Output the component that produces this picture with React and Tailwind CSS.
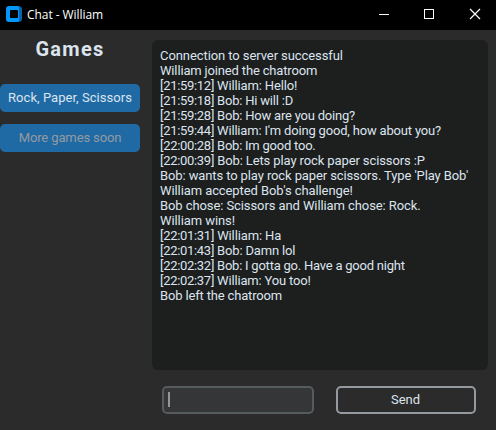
const messages = [
  { text: "Connection to server successful", spacing: "tracking-[-0.08px]" },
  { text: "William joined the chatroom", spacing: "tracking-[-0.16px]" },
  { time: "[21:59:12]", text: " William: Hello!", spacing: "tracking-[-0.15px]" },
  { time: "[21:59:18]", text: " Bob: Hi will :D", spacing: "tracking-[-0.2px]" },
  { time: "[21:59:28]", text: " Bob: How are you doing?", spacing: "tracking-[-0.21px]" },
  { time: "[21:59:44]", text: " William: I'm doing good, how about you?", spacing: "tracking-[-0.18px]" },
  { time: "[22:00:28]", text: " Bob: Im good too.", spacing: "tracking-[-0.23px]" },
  { time: "[22:00:39]", text: " Bob: Lets play rock paper scissors :P", spacing: "tracking-[-0.11px]" },
  { text: "Bob: wants to play rock paper scissors. Type 'Play Bob'", spacing: "tracking-[-0.11px]" },
  { text: "William accepted Bob's challenge!", spacing: "tracking-[-0.09px]" },
  { text: "Bob chose: Scissors and William chose: Rock.", spacing: "tracking-[-0.09px]" },
  { text: "William wins!", spacing: "tracking-[-0.08px]" },
  { time: "[22:01:31]", text: " William: Ha", spacing: "tracking-[-0.12px]" },
  { time: "[22:01:43]", text: " Bob: Damn lol", spacing: "tracking-[-0.16px]" },
  { time: "[22:02:32]", text: " Bob: I gotta go. Have a good night", spacing: "tracking-[-0.23px]" },
  { time: "[22:02:37]", text: " William: You too!", spacing: "tracking-[-0.17px]" },
  { text: "Bob left the chatroom", spacing: "tracking-[-0.16px]" },
];

function AppIcon() {
  return (
    <svg width="16" height="16" viewBox="0 0 16 16" aria-hidden="true">
      <rect width="16" height="16" rx="3.5" fill="#0864ad" />
      <path d="M3.5 0H11a2 2 0 0 1 2 2V14a2 2 0 0 1-2 2H3.5A3.5 3.5 0 0 1 0 12.5V3.5A3.5 3.5 0 0 1 3.5 0Z" fill="#0098ff" />
      <rect x="4" y="4" width="8" height="8" rx="1" fill="#000" />
    </svg>
  );
}

function TitleBar() {
  return (
    <header className="flex h-[30px] shrink-0 items-center bg-black pl-1.5 pb-[2px]">
      <AppIcon />
      <h1 className="ml-[5px] mt-[2px] font-['Open_Sans','Noto_Sans',sans-serif] text-[12px] leading-4 tracking-[-0.06px] text-white">
        Chat - William
      </h1>
      <div className="ml-auto flex items-center">
        <svg width="136" height="28" viewBox="0 0 136 28" fill="none" stroke="#fff" shapeRendering="crispEdges" aria-hidden="true">
          <path d="M19 14.5H29" />
          <rect x="64.5" y="9.5" width="9" height="9" />
          <path d="M110 9l10 10M120 9l-10 10" shapeRendering="auto" strokeWidth="1.2" />
        </svg>
      </div>
    </header>
  );
}

export default function App() {
  return (
    <div className="flex h-[430px] w-[496px] flex-col overflow-hidden bg-[#2b2b2b] font-['Roboto',sans-serif] text-[13px] leading-[15px] text-[#dce4ee]">
      <TitleBar />
      <div className="flex min-h-0 flex-1">
        <aside className="flex w-[140px] shrink-0 flex-col">
          <h2 className="mt-[7px] text-center text-[20px] font-bold leading-6 tracking-[1.3px]">Games</h2>
          <button className="mt-[23px] h-7 w-[140px] whitespace-nowrap rounded-[5px] bg-[#1f6aa5] pb-px tracking-[0.04px]">Rock, Paper, Scissors</button>
          <button className="mt-3 h-7 w-[140px] whitespace-nowrap rounded-[5px] bg-[#1f6aa5] pb-px tracking-[-0.12px] text-[#949a9f]">More games soon</button>
        </aside>
        <main className="ml-3 flex w-[336px] flex-col pt-2.5">
          <div className="h-[330px] rounded-md bg-[#1d1e1e] px-2 pt-2">
            {messages.map(({ time, text, spacing }) => (
              <p key={time ?? text} className={`whitespace-pre ${spacing}`}>
                {time && <span className="tracking-[-0.3px]">{time}</span>}
                {text}
              </p>
            ))}
          </div>
          <div className="mt-4 flex pl-2.5">
            <div className="flex h-7 w-[152px] items-center rounded-[5px] border-2 border-[#565b5e] bg-[#343638] pb-px pl-1">
              <span className="h-[15px] w-0.5 bg-[#949698]" />
            </div>
            <button className="ml-[22px] h-7 w-[140px] rounded-[5px] border-2 border-[#949a9f] pb-px pr-px">Send</button>
          </div>
        </main>
      </div>
    </div>
  );
}
